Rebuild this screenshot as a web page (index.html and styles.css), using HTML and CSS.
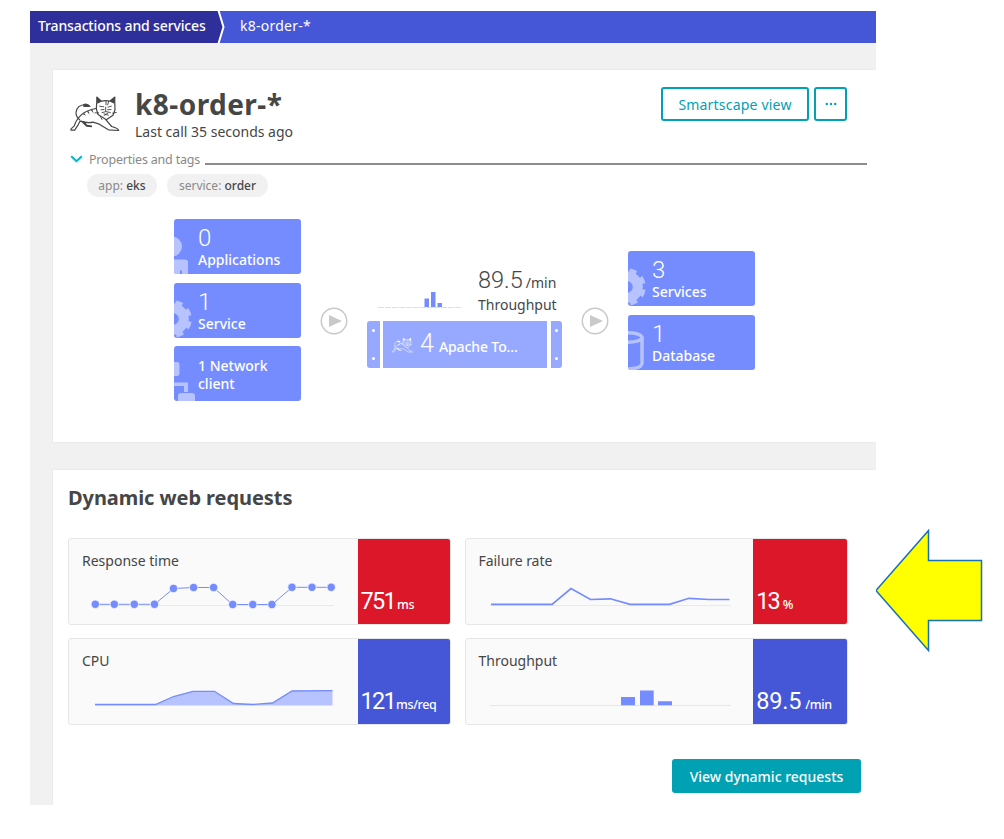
FILE: index.html
```html
<!DOCTYPE html>
<html lang="en">
<head>
<meta charset="utf-8">
<title>k8-order-*</title>
<link rel="stylesheet" href="styles.css">
</head>
<body>
<svg class="defs" width="0" height="0" aria-hidden="true">
  <symbol id="tomcat" viewBox="28 32 150 110">
    <g fill="none" stroke="currentColor" stroke-width="3.6" stroke-linejoin="round" stroke-linecap="round">
      <path d="M107 73 109 38 122 50Q134 47 147 50L162 38 163 76 157 92 137 106 112 90Z"/>
      <path d="M106 72Q78 76 61 92 45 108 41 124L31 133V137H42L50 125 58 110Q82 117 97 113L116 119 143 136 174 138Q174 132 153 126L136 106"/>
      <path d="M57 106Q46 97 46 84 48 61 76 60"/>
      <path stroke-width="2.800" d="M117 65 129 67M142 68 152 65M121 76 130 75M141 76 151 75M124 84Q135 78 149 84M135 68V79M130 88 143 92M142 86 130 93M103 85 114 85M156 86 167 84M136 50V61M144 51 141 61M119 96 124 105"/>
    </g>
    <g fill="currentColor">
      <path d="M68 59Q78 52 91 66 77 70 66 65ZM107 36 124 51 110 58ZM164 36 147 51 161 58ZM60 108 72 111 79 121 94 123 94 128 77 127 67 117ZM78 80 84 80 87 91ZM90 76 95 75 99 88ZM67 89 71 86 76 94Z"/>
    </g>
  </symbol>
  <symbol id="gear" viewBox="0 0 20 55">
    <g fill="none" stroke="#b7c3ff">
      <circle cx="-1" cy="36" r="10.8" stroke-width="10"/>
      <circle cx="-1" cy="36" r="16.8" stroke-width="4" pathLength="80" stroke-dasharray="5.4 4.6" stroke-dashoffset="-2"/>
    </g>
  </symbol>
  <symbol id="play" viewBox="0 0 28 28">
    <circle cx="14" cy="14" r="12.7" fill="#fff" stroke="#c9c9c9" stroke-width="1.5"/>
    <path d="M9 8 22 14 9 20Z" fill="#c9c9c9"/>
  </symbol>
</svg>

<div class="page">
  <main class="app">
    <nav class="crumbs">
      <a class="crumb crumb-root">Transactions and services</a>
      <svg class="crumb-sep" width="9" height="32" viewBox="0 0 9 32"><path d="M0 0H1L6 16 1 32H0Z" fill="#2f2f9b"/><path d="M1.500 -.5 6.500 16 1.500 32.500" fill="none" stroke="#fff" stroke-width="2"/></svg>
      <a class="crumb crumb-current">k8-order-*</a>
    </nav>

    <section class="card overview">
      <header class="head">
        <svg class="cat" width="50" height="37"><use href="#tomcat"/></svg>
        <div class="titles">
          <h1>k8-order-*</h1>
          <p>Last call 35 seconds ago</p>
        </div>
        <div class="actions">
          <button class="btn btn-view"><span>Smartscape view</span></button>
          <button class="btn btn-more"><svg width="12" height="4" viewBox="0 0 12 4"><g fill="#00a1b2"><circle cx="1.8" cy="2" r="1.2"/><circle cx="6" cy="2" r="1.2"/><circle cx="10.2" cy="2" r="1.2"/></g></svg></button>
        </div>
      </header>

      <div class="props">
        <svg width="13" height="8" viewBox="0 0 13 8"><path d="M1.2 1.2 6.5 6.2 11.8 1.2" fill="none" stroke="#00b4cc" stroke-width="2"/></svg>
        <span class="props-label">Properties and tags</span>
        <span class="props-line"></span>
      </div>
      <div class="tags">
        <span class="tag tag-app">app: <b>eks</b></span>
        <span class="tag tag-service">service: <b>order</b></span>
      </div>

      <div class="flow">
        <div class="stack">
          <div class="node">
            <svg class="node-icon" width="20" height="55" viewBox="0 0 20 55"><g fill="#b7c3ff"><circle cx="-2" cy="27.500" r="10"/><path d="M0 40.500H11Q14 40.500 14 43.500V55H8V51.500H6V55H0Z"/></g></svg>
            <span class="node-num">0</span><span class="node-name n-app">Applications</span>
          </div>
          <div class="node">
            <svg class="node-icon" width="20" height="55"><use href="#gear"/></svg>
            <span class="node-num">1</span><span class="node-name n-service">Service</span>
          </div>
          <div class="node node-two">
            <svg class="node-icon" width="22" height="55" viewBox="0 0 22 55"><g fill="#b7c3ff"><path d="M0 16H3Q5.500 16 5.500 19V27Q5.500 30 3 30H0ZM0 36.500H14V46H10V40H0ZM4 55V50Q4 47 7 47H18Q21 47 21 50V55Z"/></g></svg>
            <span class="node-name n-net">1 Network</span><span class="node-name n-client">client</span>
          </div>
        </div>

        <svg class="play" width="28" height="28"><use href="#play"/></svg>

        <div class="center">
          <div class="load">
            <svg width="85" height="20" viewBox="0 0 85 20"><path d="M0 18.500H84" stroke="#d5dcff" stroke-dasharray="6 1"/><path d="M46.500 9.500H51V18H46.500ZM53 3H57.500V18H53ZM59.500 14H64V18H59.500Z" fill="#748cff"/></svg>
            <div class="load-text">
              <div class="load-value"><span class="load-num">89.5</span><span class="load-unit">/min</span></div>
              <div class="load-label">Throughput</div>
            </div>
          </div>
          <div class="group">
            <span class="rail rail-left"><i></i><i></i></span>
            <div class="group-main">
              <svg width="21" height="16"><use href="#tomcat"/></svg>
              <span class="group-num">4</span><span class="group-name">Apache To…</span>
            </div>
            <span class="rail rail-right"><i></i><i></i></span>
          </div>
        </div>

        <svg class="play" width="28" height="28"><use href="#play"/></svg>

        <div class="stack stack-out">
          <div class="node">
            <svg class="node-icon" width="20" height="55"><use href="#gear"/></svg>
            <span class="node-num">3</span><span class="node-name n-services">Services</span>
          </div>
          <div class="node">
            <svg class="node-icon" width="20" height="55" viewBox="0 0 20 55"><g fill="none" stroke="#b7c3ff" stroke-width="3.500"><ellipse cx="0" cy="22.500" rx="14" ry="4.700"/><path d="M14 22V48Q14 53.500 0 54"/></g></svg>
            <span class="node-num">1</span><span class="node-name n-db">Database</span>
          </div>
        </div>
      </div>
    </section>

    <section class="card requests">
      <h2>Dynamic web requests</h2>
      <div class="metrics">
        <article class="metric">
          <div class="metric-body">
            <h3 class="m-resp">Response time</h3>
            <svg class="chart" width="260" height="40" viewBox="82 575 260 40">
              <path d="M91 605.500H334" stroke="#e6e9fb"/>
              <path d="M95 604.300H154.500L173.500 588.500 193.500 587.500H213.500L232.500 604.500H272L292 587.300H331" fill="none" stroke="#748cff"/>
              <g fill="#748cff" stroke="#fafafa" stroke-width=".8"><circle cx="95.300" cy="604.300" r="4.200"/><circle cx="114.300" cy="604.300" r="4.200"/><circle cx="134.300" cy="604.300" r="4.200"/><circle cx="154.500" cy="604.300" r="4.200"/><circle cx="173.500" cy="588.500" r="4.200"/><circle cx="193.600" cy="587.500" r="4.200"/><circle cx="213.600" cy="587.500" r="4.200"/><circle cx="232.700" cy="604.500" r="4.200"/><circle cx="252.800" cy="604.500" r="4.200"/><circle cx="271.900" cy="604.500" r="4.200"/><circle cx="292" cy="587.300" r="4.200"/><circle cx="312" cy="587.300" r="4.200"/><circle cx="331.200" cy="587.300" r="4.200"/></g>
            </svg>
          </div>
          <div class="value bad"><span class="num v1">751</span><span class="unit">ms</span></div>
        </article>
        <article class="metric">
          <div class="metric-body">
            <h3 class="m-fail">Failure rate</h3>
            <svg class="chart" width="260" height="40" viewBox="479 575 260 40">
              <path d="M490 605.500H731" stroke="#e6e9fb"/>
              <path d="M491 604.400H552L571 588.500 590.500 599.500 610.500 598.800 630 604.300H669.500L689 598.300 709 599.500H729.500" fill="none" stroke="#748cff" stroke-width="1.700"/>
            </svg>
          </div>
          <div class="value bad"><span class="num v2">13</span><span class="unit">%</span></div>
        </article>
        <article class="metric">
          <div class="metric-body">
            <h3 class="m-cpu">CPU</h3>
            <svg class="chart" width="260" height="40" viewBox="82 675 260 40">
              <path d="M95 704.300H155.500L173.500 696.500 193 691.300H214.500L233.500 703.500 253 704.500 272.500 703 292 691 332.500 690.600V705.500H95Z" fill="#b7c3ff"/>
              <path d="M95 704.500H155.500L173.500 696.500 193 691.300H214.500L233.500 703.500 253 704.500 272.500 703 292 691 332.500 690.600" fill="none" stroke="#748cff" stroke-width="1.300"/>
            </svg>
          </div>
          <div class="value ok"><span class="num v3">121</span><span class="unit u-req">ms/req</span></div>
        </article>
        <article class="metric">
          <div class="metric-body">
            <h3 class="m-thr">Throughput</h3>
            <svg class="chart" width="260" height="40" viewBox="479 675 260 40">
              <path d="M490 705.500H731" stroke="#e2e6fb"/>
              <path d="M621 697H635V705.300H621ZM640 690.500H653.700V705.300H640ZM658 701.300H672V705.300H658Z" fill="#748cff"/>
            </svg>
          </div>
          <div class="value ok"><span class="num v4">89.5</span><span class="unit u-min">/min</span></div>
        </article>
      </div>
      <button class="btn-primary"><span>View dynamic requests</span></button>
    </section>
  </main>

  <svg class="arrow" width="110" height="126" viewBox="874 527 110 126"><path d="M876 590.500 928.500 530.500V560.500H981.500V620.500H928.500V650.500Z" fill="#ff0" stroke="#1670c0" stroke-width="1.500"/></svg>
</div>
</body>
</html>
```

FILE: styles.css
```css
* { box-sizing: border-box; }
body {
  margin: 0;
  background: #fff;
  color: #454646;
  font-family: "Noto Sans", "Open Sans", sans-serif;
  font-size: 14px;
  white-space: nowrap;
}
h1, h2, h3, p { margin: 0; }
svg { display: block; flex: none; }
button { font: inherit; padding: 0; display: flex; align-items: center; justify-content: center; }
.defs { display: none; }

.page { display: flex; align-items: flex-start; padding: 11px 0 0 30px; }
.app { width: 846px; height: 794px; background: #f1f1f1; flex: none; }
.arrow { margin: 516px 0 0 -2px; }

/* breadcrumbs */
.crumbs { display: flex; height: 32px; background: #4556d7; color: #fff; line-height: 30px; }
.crumb-root { width: 187px; padding-left: 8px; background: #2f2f9b; font-weight: 500; letter-spacing: -.13px; }
.crumb-current { margin-left: 14px; letter-spacing: .25px; }

/* cards */
.card { margin-left: 23px; background: #fff; box-shadow: 0 0 1px 1px #ebebeb; clip-path: inset(-2px 0 -2px -2px); }
.overview { margin-top: 27px; height: 372px; padding: 17px 0 0 17px; }
.head { display: flex; height: 56px; }
.cat { margin: 8px 15px 0 0; color: #454646; }
.titles { flex: 1; }
h1 { font-size: 28px; line-height: 34px; font-weight: 700; letter-spacing: .45px; }
.titles p { line-height: 22px; }
.actions { display: flex; gap: 5px; margin-right: 29px; }
.btn { height: 34px; border: 2px solid #00a1b2; border-radius: 3px; background: #fff; color: #00a1b2; }
.btn-view { width: 148px; letter-spacing: .2px; }
.btn-more svg { margin-top: -1px; }
.btn-more { width: 33px; }

.props { display: flex; height: 18px; margin-top: 7px; align-items: center; color: #898989; font-size: 12.500px; line-height: 18px; }
.props-label { margin: 1px 0 0 6px; width: 116px; letter-spacing: -.2px; }
.props-line { width: 662px; height: 2px; background: #8d8d8d; margin-top: 9px; }
.tags { display: flex; gap: 10px; margin: 6px 0 0 17px; }
.tag { height: 23px; border-radius: 12px; background: #f1f1f1; color: #898989; font-size: 12px; line-height: 23px; text-align: center; }
.tag b { font-weight: 500; color: #454646; }
.tag-app { width: 70px; }
.tag-service { width: 101px; }

/* service flow */
.flow { display: flex; align-items: center; height: 183px; margin: 21.500px 0 0 104px; }
.stack { display: flex; flex-direction: column; gap: 8.500px; }
.stack-out { margin-top: 1px; }
.node { position: relative; display: flex; flex-direction: column; width: 127px; height: 55px; padding: 6px 0 0 24px; border-radius: 3px; background: #748cff; color: #fff; overflow: hidden; }
.node-icon { position: absolute; left: 0; top: 0; }
.node-num, .load-num, .group-num, .num { font-family: Roboto, "Noto Sans", sans-serif; font-weight: 300; }
.node-num { font-size: 24px; line-height: 26px; }
.node-name { line-height: 18px; font-weight: 500; }
.node-two { padding-top: 11px; }
.play { margin: 21px 19px 0; }
.stack + .play { margin-top: 21px; }
.center { width: 195px; margin-top: 16px; }
.load { display: flex; height: 53px; padding-left: 11px; }
.load svg { margin-top: 21px; }
.load-text { margin-left: 15px; }
.load-value { display: flex; align-items: baseline; height: 26px; line-height: 24px; }
.load-num { font-size: 23.500px; }
.load-unit { margin-left: 3px; }
.load-label { line-height: 22px; }
.group { display: flex; justify-content: space-between; height: 47px; }
.rail { display: flex; flex-direction: column; justify-content: space-between; align-items: center; padding: 8px 0; background: #97a9ff; }
.rail i { width: 3px; height: 3px; border-radius: 50%; background: #fff; }
.rail-left { width: 13px; border-radius: 3px 0 0 3px; }
.rail-right { width: 11px; border-radius: 0 3px 3px 0; }
.group-main { display: flex; align-items: center; width: 164px; padding-left: 9px; margin-right: 1px; background: #97a9ff; color: #fff; }
.group-num { font-size: 25px; margin: -1px 5px 0 7px; line-height: 40px; }
.group-name { font-weight: 500; margin-top: 3px; letter-spacing: -.1px; }

/* request metrics */
.requests { margin-top: 28px; height: 335px; padding: 14px 0 0 15px; }
h2 { font-size: 20px; line-height: 28px; font-weight: 700; letter-spacing: -.07px; }
.metrics { display: grid; grid-template-columns: 383px 383px; gap: 13px 13.500px; margin-top: 26px; }
.metric { display: flex; height: 87px; border: 1px solid #e6e6e6; border-radius: 3px; background: #fafafa; overflow: hidden; }
.metric-body { width: 288.500px; padding: 12px 0 0 13px; }
.metric:nth-child(even) .metric-body { width: 287.800px; }
h3 { font-size: 14px; font-weight: 400; line-height: 20px; }
.m-fail { letter-spacing: -.05px; }
.chart { margin-top: 4px; }
.value { flex: 1; display: flex; align-items: baseline; padding: 47px 0 0 3px; color: #fff; }
.bad { background: #dc172a; }
.ok { background: #4556d7; }
.num { font-size: 23.500px; line-height: 30px; }
.bad .num, .ok .num { font-weight: 400; }
.v1, .v3 { letter-spacing: -1.700px; }
.v2 { letter-spacing: -2px; }
.v4 { letter-spacing: -.2px; }
.unit { font-size: 12.500px; font-weight: 500; margin-left: 4px; letter-spacing: -.4px; }
.v1 + .unit { margin-left: 2px; }
.v2 + .unit { margin-left: 4px; }
.v3 + .unit { margin-left: 1px; }
.btn-primary { width: 189px; height: 34px; margin: 34px 0 0 604px; border: 0; border-radius: 3px; background: #00a1b2; color: #fff; font-weight: 500; }
```
